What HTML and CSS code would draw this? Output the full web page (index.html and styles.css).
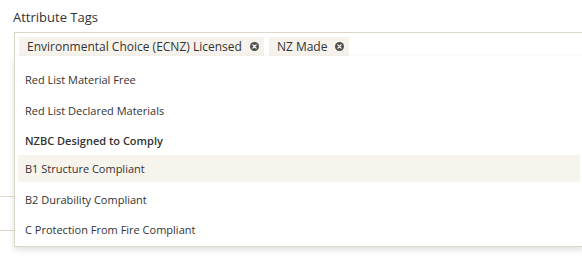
FILE: index.html
```
<!DOCTYPE html>
<html>
<head>
<meta charset="utf-8">
<link rel="stylesheet" href="styles.css">
</head>
<body>
<div class="page">
  <div class="field">
    <div class="label">Attribute Tags</div>
    <div class="select">
      <div class="tags">
        <span class="tag">Environmental Choice (ECNZ) Licensed<span class="x"><svg width="9" height="9" viewBox="0 0 10 10"><circle cx="5" cy="5" r="5" fill="#4f4f4f"/><path d="M3.2 3.2L6.8 6.8M6.8 3.2L3.2 6.8" stroke="#fff" stroke-width="1.5" stroke-linecap="round"/></svg></span></span>
        <span class="tag">NZ Made<span class="x"><svg width="9" height="9" viewBox="0 0 10 10"><circle cx="5" cy="5" r="5" fill="#4f4f4f"/><path d="M3.2 3.2L6.8 6.8M6.8 3.2L3.2 6.8" stroke="#fff" stroke-width="1.5" stroke-linecap="round"/></svg></span></span>
      </div>
      <div class="bg-field one"></div>
      <div class="bg-field two"></div>
      <ul class="menu">
        <li class="opt">Red List Material Free</li>
        <li class="opt">Red List Declared Materials</li>
        <li class="opt group">NZBC Designed to Comply</li>
        <li class="opt active">B1 Structure Compliant</li>
        <li class="opt">B2 Durability Compliant</li>
        <li class="opt">C Protection From Fire Compliant</li>
      </ul>
    </div>
  </div>
</div>
</body>
</html>
```
FILE: styles.css
```
html, body {
  margin: 0;
  padding: 0;
  background: #fff;
}
body {
  font-family: "Open Sans", "Liberation Sans", sans-serif;
  color: #333;
  width: 582px;
  height: 265px;
  overflow: hidden;
}
.page {
  padding: 8px 0 0 13px;
}
.label {
  font-size: 13px;
  line-height: 18px;
  color: #333;
  margin-bottom: 6px;
}
.select {
  position: relative;
  margin-left: 1px;
  width: 570px;
}
.tags {
  border: 1px solid #ddd7ca;
  border-bottom: none;
  padding: 4px 4px 0;
  display: flex;
  gap: 5px;
  height: 20px;
}
.tag {
  display: flex;
  align-items: center;
  background: #f6f3ed;
  font-size: 12px;
  height: 19px;
  line-height: 19px;
  padding: 0 5px 0 8px;
  color: #333;
}
.x {
  display: flex;
  margin-left: 8px;
}
.bg-field {
  border-top: 1px solid #ddd7ca;
  margin-left: -14px;
}
.bg-field.one {
  margin-top: 139px;
}
.bg-field.two {
  margin-top: 33px;
}
.menu {
  position: absolute;
  top: 24px;
  left: 0;
  right: 0;
  margin: 0;
  padding: 10px 3px 0 3px;
  list-style: none;
  background: #fff;
  border: 1px solid #ddd7ca;
  border-top: none;
  box-shadow: 0 3px 6px rgba(0,0,0,0.12);
  box-sizing: border-box;
  height: 191px;
}
.opt {
  font-size: 11px;
  line-height: 17px;
  padding: 5px 7px;
  color: #333;
}
.opt:nth-child(2) { margin-top: 4px; }
.opt:nth-child(3) { margin-top: 3px; }
.opt:nth-child(4) { margin-top: 1px; }
.opt:nth-child(5) { margin-top: 4px; }
.opt:nth-child(6) { margin-top: 3px; }
.group {
  font-weight: 600;
}
.active {
  background: #f7f4ee;
}
```
